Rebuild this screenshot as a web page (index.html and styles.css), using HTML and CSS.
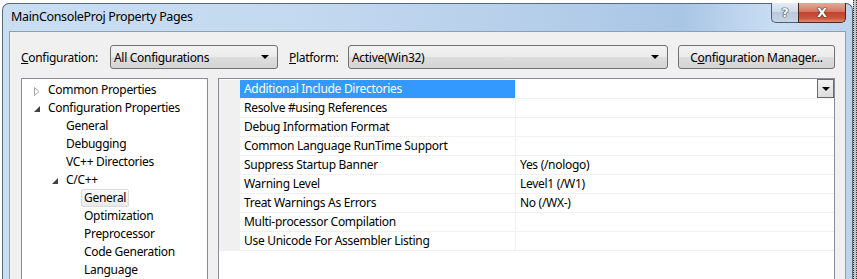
FILE: index.html
```html
<!DOCTYPE html>
<html lang="en">
  <head>
    <meta charset="UTF-8" />
    <title>MainConsoleProj Property Pages</title>
    <link rel="stylesheet" href="styles.css">
  </head>
  <body>
    <div class="screen">
      <div class="window">
        <div class="titlebar">
          <span class="title">MainConsoleProj Property Pages</span>
          <div class="caption-buttons">
            <button class="cap-btn cap-help">?</button>
            <button class="cap-btn cap-close">X</button>
          </div>
        </div>

        <div class="client">
          <div class="toolbar">
            <label class="lbl lbl-config"><u>C</u>onfiguration:</label>
            <div class="combo combo-config">
              <span>All Configurations</span>
              <i class="arrow"></i>
            </div>
            <label class="lbl lbl-platform"><u>P</u>latform:</label>
            <div class="combo combo-platform">
              <span>Active(Win32)</span>
              <i class="arrow"></i>
            </div>
            <button class="btn-manager">C<u>o</u>nfiguration Manager...</button>
          </div>

          <div class="panes">
            <!-- Property tree -->
            <ul class="tree">
              <li class="node lvl0">
                <span class="exp"><svg width="12" height="18"><path d="M1.5 6.5 L6 10.5 L1.5 14.5 Z" fill="none" stroke="#a6a6a6"/></svg></span>
                <span class="txt">Common Properties</span>
              </li>
              <li class="node lvl0">
                <span class="exp"><svg width="12" height="18"><path d="M7 7 V13 H1 Z" fill="#404040"/></svg></span>
                <span class="txt">Configuration Properties</span>
              </li>
              <li class="node lvl1"><span class="exp"></span><span class="txt">General</span></li>
              <li class="node lvl1"><span class="exp"></span><span class="txt">Debugging</span></li>
              <li class="node lvl1"><span class="exp"></span><span class="txt">VC++ Directories</span></li>
              <li class="node lvl1">
                <span class="exp"><svg width="12" height="18"><path d="M7 7 V13 H1 Z" fill="#404040"/></svg></span>
                <span class="txt">C/C++</span>
              </li>
              <li class="node lvl2"><span class="exp"></span><span class="txt selected">General</span></li>
              <li class="node lvl2"><span class="exp"></span><span class="txt">Optimization</span></li>
              <li class="node lvl2"><span class="exp"></span><span class="txt">Preprocessor</span></li>
              <li class="node lvl2"><span class="exp"></span><span class="txt">Code Generation</span></li>
              <li class="node lvl2"><span class="exp"></span><span class="txt">Language</span></li>
            </ul>

            <!-- Property grid -->
            <div class="grid">
              <div class="row">
                <div class="gutter"></div>
                <div class="name active">Additional Include Directories</div>
                <div class="value">
                  <span class="drop-btn"><i class="arrow"></i></span>
                </div>
              </div>
              <div class="row">
                <div class="gutter"></div>
                <div class="name">Resolve #using References</div>
                <div class="value"></div>
              </div>
              <div class="row">
                <div class="gutter"></div>
                <div class="name">Debug Information Format</div>
                <div class="value"></div>
              </div>
              <div class="row">
                <div class="gutter"></div>
                <div class="name">Common Language RunTime Support</div>
                <div class="value"></div>
              </div>
              <div class="row">
                <div class="gutter"></div>
                <div class="name">Suppress Startup Banner</div>
                <div class="value">Yes (/nologo)</div>
              </div>
              <div class="row">
                <div class="gutter"></div>
                <div class="name">Warning Level</div>
                <div class="value">Level1 (/W1)</div>
              </div>
              <div class="row">
                <div class="gutter"></div>
                <div class="name">Treat Warnings As Errors</div>
                <div class="value">No (/WX-)</div>
              </div>
              <div class="row">
                <div class="gutter"></div>
                <div class="name">Multi-processor Compilation</div>
                <div class="value"></div>
              </div>
              <div class="row">
                <div class="gutter"></div>
                <div class="name">Use Unicode For Assembler Listing</div>
                <div class="value"></div>
              </div>
            </div>
          </div>
        </div>
      </div>
      <div class="desk-edge"></div>
    </div>
  </body>
</html>
```

FILE: styles.css
```css
/* General styles */
body {
  margin: 0;
  background-color: white;
  font-family: "Noto Sans", "Open Sans", sans-serif;
  font-size: 12px;
  letter-spacing: -0.3px;
  color: #000;
  height: 279px;
  overflow: hidden;
}

.screen {
  display: flex;
  padding: 3px 0 0 2px;
  height: 276px;
}

/* Window frame */
.window {
  width: 851px;
  box-sizing: border-box;
  border: 1px solid #56697f;
  border-bottom: none;
  border-radius: 7px 7px 0 0;
  padding: 0 6px;
  background: linear-gradient(to right, #cadef2 0%, #c3d9ef 35%, #b7cfea 60%, #a9c6e5 80%, #cadef3 91%, #bcd3ec 100%);
}

.desk-edge {
  width: 2px;
  margin-top: -3px;
  border-left: 1px dotted #333;
  border-right: 1px dotted #333;
  background-color: #c4c4c4;
}

.titlebar {
  display: flex;
  height: 27px;
}

.title {
  margin: 4px 0 0 2px;
  line-height: 18px;
  font-size: 12.5px;
  letter-spacing: -0.35px;
}

.caption-buttons {
  margin-left: auto;
  margin-top: -1px;
  display: flex;
}

.cap-btn {
  height: 20px;
  padding: 0;
  border: 1px solid #4d5c70;
  border-top: none;
  font-family: "DejaVu Sans", sans-serif;
  font-weight: bold;
  font-size: 13px;
  letter-spacing: 0;
  line-height: 18px;
  color: white;
  text-shadow: 0 0 1px #1e2a38, 0 0 1px #1e2a38, 0 0 1px #1e2a38;
}

.cap-help {
  width: 27px;
  border-right: none;
  border-radius: 0 0 0 5px;
  background: linear-gradient(#e4ecf5, #cfdbe9 45%, #b9cadd 50%, #c8d6e6 100%);
}

.cap-close {
  width: 48px;
  border-color: #4a2620;
  border-radius: 0 0 5px 0;
  background: linear-gradient(#e9a898, #d67764 45%, #c2432d 50%, #cb543c 80%, #de8d74 100%);
}

/* Client area */
.client {
  height: 260px;
  border: 1px solid #8e9fb3;
  background-color: #f0f0f0;
  padding: 13px 0 0 11px;
}

.toolbar {
  display: flex;
  align-items: center;
  height: 24px;
}

.lbl-config {
  width: 89px;
}

.lbl-platform {
  width: 59px;
  margin-left: 11px;
}

.combo,
.btn-manager {
  box-sizing: border-box;
  height: 24px;
  border: 1px solid #707070;
  border-radius: 3px;
  background: linear-gradient(#f3f3f3, #ebebeb 48%, #dddddd 52%, #d4d4d4);
  font-family: inherit;
  font-size: 12px;
  letter-spacing: -0.3px;
  color: #000;
}

.combo {
  display: flex;
  align-items: center;
  padding: 0 8px 0 3px;
}

.combo-config {
  width: 168px;
}

.combo-platform {
  width: 320px;
}

.arrow {
  margin-left: auto;
  width: 0;
  height: 0;
  border-left: 4px solid transparent;
  border-right: 4px solid transparent;
  border-top: 4px solid #000;
}

.btn-manager {
  width: 157px;
  margin-left: 10px;
  padding: 0;
}

.panes {
  display: flex;
  gap: 10px;
  margin-top: 9px;
}

/* Tree */
.tree {
  list-style: none;
  margin: 0;
  padding: 2px 0 0 0;
  width: 187px;
  height: 220px;
  box-sizing: border-box;
  border: 1px solid #898c95;
  background-color: white;
}

.node {
  display: flex;
  align-items: center;
  height: 18px;
  white-space: nowrap;
}

.node.lvl0 {
  padding-left: 11px;
}

.node.lvl1 {
  padding-left: 29px;
}

.node.lvl2 {
  padding-left: 47px;
}

.exp {
  width: 12px;
  height: 18px;
  flex-shrink: 0;
}

.exp svg {
  display: block;
}

.txt {
  box-sizing: border-box;
  height: 18px;
  line-height: 16px;
  padding: 0 2px;
  border: 1px solid transparent;
  border-radius: 2px;
}

.txt.selected {
  border-color: #d9d9d9;
  background: linear-gradient(#fafafa, #e9e9e9);
}

/* Property grid */
.grid {
  width: 617px;
  height: 220px;
  box-sizing: border-box;
  border: 1px solid #898c95;
  background-color: white;
  padding-top: 1px;
}

.row {
  display: flex;
  height: 19px;
  box-sizing: border-box;
  border-bottom: 1px solid #f0f0f0;
  line-height: 18px;
}

.gutter {
  width: 21px;
  background-color: #f0f0f0;
}

.name {
  width: 276px;
  padding-left: 4px;
  box-sizing: border-box;
  border-right: 1px solid #f0f0f0;
  white-space: nowrap;
}

.name.active {
  background-color: #3399ff;
  color: white;
}

.value {
  flex: 1;
  display: flex;
  padding-left: 4px;
}

.drop-btn {
  display: flex;
  align-items: center;
  justify-content: center;
  box-sizing: border-box;
  width: 17px;
  height: 19px;
  margin: -1px 0 0 auto;
  border: 1px solid #6b6b6b;
  background: linear-gradient(#f2f2f2, #dcdcdc);
}

.drop-btn .arrow {
  margin: 0;
}
```
